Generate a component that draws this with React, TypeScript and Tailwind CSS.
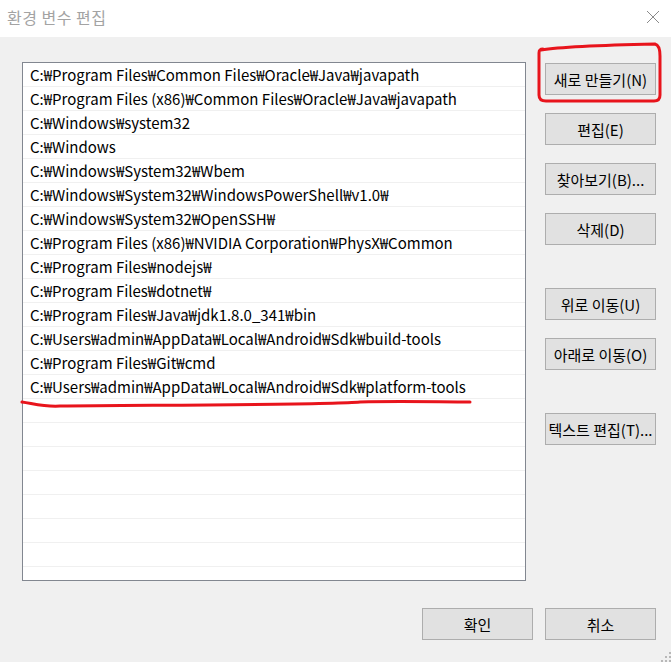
import React from 'react';

const PATHS = [
  'C:₩Program Files₩Common Files₩Oracle₩Java₩javapath',
  'C:₩Program Files (x86)₩Common Files₩Oracle₩Java₩javapath',
  'C:₩Windows₩system32',
  'C:₩Windows',
  'C:₩Windows₩System32₩Wbem',
  'C:₩Windows₩System32₩WindowsPowerShell₩v1.0₩',
  'C:₩Windows₩System32₩OpenSSH₩',
  'C:₩Program Files (x86)₩NVIDIA Corporation₩PhysX₩Common',
  'C:₩Program Files₩nodejs₩',
  'C:₩Program Files₩dotnet₩',
  'C:₩Program Files₩Java₩jdk1.8.0_341₩bin',
  'C:₩Users₩admin₩AppData₩Local₩Android₩Sdk₩build-tools',
  'C:₩Program Files₩Git₩cmd',
  'C:₩Users₩admin₩AppData₩Local₩Android₩Sdk₩platform-tools',
];

const FONT = "font-['Noto_Sans_CJK_KR',sans-serif]";

function Btn({ label, className = '' }: { label: string; className?: string }) {
  return (
    <button
      className={`h-[32px] w-[111px] bg-[#e1e1e1] border border-[#adadad] text-[15px] leading-none text-black ${className}`}
    >
      {label}
    </button>
  );
}

export default function App() {
  const rows = [...PATHS, ...Array(8).fill('')];

  return (
    <div className={`relative w-[671px] h-[662px] bg-[#f0f0f0] flex flex-col overflow-hidden ${FONT}`}>
      {/* title bar */}
      <div className="h-[37px] bg-white flex items-center justify-between pl-[7px] pr-[11px] pb-[3px]">
        <span className="text-[16px] text-[#a3a3a3] tracking-[0.5px]">환경 변수 편집</span>
        <svg width="14" height="14" viewBox="0 0 14 14" className="text-[#8a8a8a]">
          <path d="M1 1 L13 13 M13 1 L1 13" stroke="currentColor" strokeWidth="1" />
        </svg>
      </div>

      {/* body */}
      <div className="flex pl-[22px] pt-[25px]">
        <div className="w-[504px] h-[519px] border border-[#828790] bg-white overflow-hidden">
          {rows.map((p, i) => (
            <div
              key={i}
              className="h-[24px] border-b border-[#f0f0f0] pl-[7px] pt-[2px] flex items-center text-[15px] text-black whitespace-nowrap"
            >
              {p}
            </div>
          ))}
        </div>

        <div className="ml-[19px] mt-[1px] flex flex-col">
          <Btn label="새로 만들기(N)" />
          <Btn label="편집(E)" className="mt-[18px]" />
          <Btn label="찾아보기(B)..." className="mt-[18px]" />
          <Btn label="삭제(D)" className="mt-[18px]" />
          <Btn label="위로 이동(U)" className="mt-[43px]" />
          <Btn label="아래로 이동(O)" className="mt-[18px]" />
          <Btn label="텍스트 편집(T)..." className="mt-[43px]" />
        </div>
      </div>

      {/* footer buttons */}
      <div className="flex justify-end gap-[12px] pr-[15px] mt-[27px]">
        <Btn label="확인" className="w-[110px]" />
        <Btn label="취소" />
      </div>

      {/* resize grip */}
      <svg width="10" height="10" viewBox="0 0 10 10" className="absolute right-0 bottom-0 text-[#b8b8b8]">
        <rect x="8" y="0" width="2" height="2" fill="currentColor" />
        <rect x="4" y="4" width="2" height="2" fill="currentColor" />
        <rect x="8" y="4" width="2" height="2" fill="currentColor" />
        <rect x="0" y="8" width="2" height="2" fill="currentColor" />
        <rect x="4" y="8" width="2" height="2" fill="currentColor" />
        <rect x="8" y="8" width="2" height="2" fill="currentColor" />
      </svg>

      {/* red hand-drawn annotations */}
      <svg width="671" height="662" className="absolute inset-0 pointer-events-none">
        <path
          d="M541 50 C560 47, 610 45, 655 44 C659 45, 660 49, 660 56 L660 95 C660 99, 658 101, 654 101 L546 101 C541 101, 539 99, 539 95 L539 53 C539 50, 540 49, 543 49"
          fill="none"
          stroke="#e8141c"
          strokeWidth="3"
          strokeLinecap="round"
        />
        <path
          d="M22 402 C35 404, 45 407, 60 406 C150 405, 330 405, 360 402 C400 401, 440 402, 470 402"
          fill="none"
          stroke="#e8141c"
          strokeWidth="3"
          strokeLinecap="round"
        />
      </svg>
    </div>
  );
}
